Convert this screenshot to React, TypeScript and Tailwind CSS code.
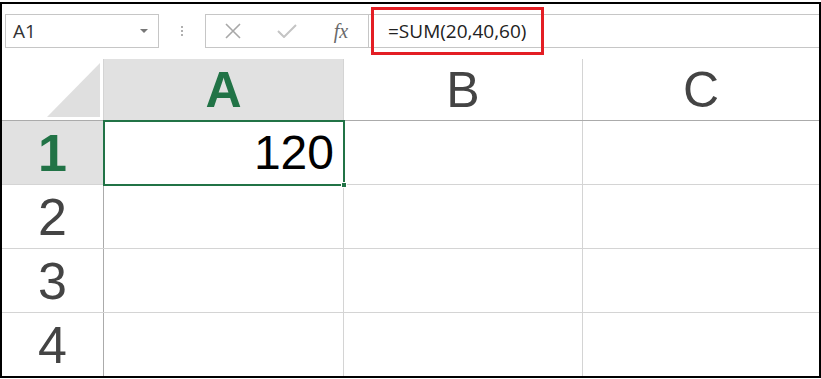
import React from "react";

const GRID_FONT = { fontFamily: '"Liberation Sans", Arial, sans-serif' };
const UI_FONT = { fontFamily: '"Open Sans", "Noto Sans", sans-serif' };

function RowHeader({ n, selected }: { n: string; selected?: boolean }) {
  return (
    <div
      className={`w-[102px] shrink-0 h-full flex items-center justify-center border-r border-[#ababab] ${
        selected ? "bg-[#e1e1e1] text-[#217346] font-bold" : "bg-white text-[#444444]"
      } text-[52px] leading-none`}
    >
      {n}
    </div>
  );
}

function EmptyRow({ n }: { n: string }) {
  return (
    <div className="h-[64px] shrink-0 flex border-b border-[#d4d4d4]">
      <RowHeader n={n} />
      <div className="w-[240px] shrink-0 border-r border-[#d4d4d4]" />
      <div className="w-[239px] shrink-0 border-r border-[#d4d4d4]" />
      <div className="flex-1" />
    </div>
  );
}

export default function App() {
  return (
    <div className="w-[821px] h-[379px] bg-white pt-[2px] overflow-hidden">
      <div className="h-[376px] border-2 border-black flex flex-col overflow-hidden">
        {/* Toolbar */}
        <div className="h-[55px] shrink-0 flex items-start pt-[10px] pl-[3px]" style={UI_FONT}>
          <div className="w-[154px] h-[34px] shrink-0 border border-[#c6c6c6] flex items-center justify-between pl-[7px] pr-[10px]">
            <span className="text-[19px] text-[#333333] leading-none">A1</span>
            <svg width="8" height="4" viewBox="0 0 8 4">
              <path d="M0 0 L8 0 L4 4 Z" fill="#777777" />
            </svg>
          </div>
          <div className="w-[46px] h-[34px] shrink-0 flex flex-col items-center justify-center gap-[2px]">
            <div className="w-[2px] h-[2px] bg-[#b0b0b0]" />
            <div className="w-[2px] h-[2px] bg-[#b0b0b0]" />
            <div className="w-[2px] h-[2px] bg-[#b0b0b0]" />
          </div>
          <div className="w-[163px] h-[34px] shrink-0 border-l border-t border-b border-[#c6c6c6] flex">
            <div className="flex-1 flex items-center justify-center">
              <svg width="18" height="16" viewBox="0 0 18 16">
                <path d="M2 1 L16 15 M16 1 L2 15" stroke="#a8a8a8" strokeWidth="1.6" fill="none" />
              </svg>
            </div>
            <div className="flex-1 flex items-center justify-center">
              <svg width="20" height="14" viewBox="0 0 20 14">
                <path d="M1 7 L7 13 L19 1" stroke="#c4c4c4" strokeWidth="2" fill="none" />
              </svg>
            </div>
            <div className="flex-1 flex items-center justify-center">
              <span
                className="italic text-[20px] text-[#6a6a6a] leading-none"
                style={{ fontFamily: '"Liberation Serif", "Times New Roman", serif' }}
              >
                fx
              </span>
            </div>
          </div>
          <div className="flex-1 h-[34px] border-l border-t border-b border-[#c6c6c6] relative flex items-center pl-[19px]">
            <span className="text-[19px] text-[#222222] leading-none">=SUM(20,40,60)</span>
            <div className="absolute left-[2px] top-[-8px] w-[173px] h-[48px] border-[3px] border-[#e31e24]" />
          </div>
        </div>

        {/* Grid */}
        <div className="flex-1 flex flex-col" style={GRID_FONT}>
          {/* Header row */}
          <div className="h-[62px] shrink-0 flex border-b border-[#ababab]">
            <div className="w-[102px] shrink-0 relative border-r border-[#d4d4d4] bg-white">
              <svg className="absolute left-0 top-0" width="102" height="62" viewBox="0 0 102 62">
                <path d="M45 58 L98 4 L98 58 Z" fill="#dfdfdf" />
              </svg>
            </div>
            <div className="w-[240px] shrink-0 bg-[#e1e1e1] border-r border-[#d4d4d4] flex items-center justify-center text-[50px] font-bold text-[#217346] leading-none">
              A
            </div>
            <div className="w-[239px] shrink-0 border-r border-[#d4d4d4] flex items-center justify-center text-[50px] text-[#444444] leading-none">
              B
            </div>
            <div className="flex-1 flex items-center justify-center text-[50px] text-[#444444] leading-none">
              C
            </div>
          </div>

          {/* Row 1 */}
          <div className="h-[64px] shrink-0 flex border-b border-[#d4d4d4]">
            <RowHeader n="1" selected />
            <div className="w-[240px] shrink-0 border-r border-[#d4d4d4] relative flex items-center justify-end pr-[9px] text-[48px] text-black leading-none">
              120
              <div className="absolute left-[-1px] top-[-1px] w-[242px] h-[66px] border-2 border-[#217346]">
                <div className="absolute right-[-4px] bottom-[-4px] w-[6px] h-[6px] bg-[#217346] border border-white" />
              </div>
            </div>
            <div className="w-[239px] shrink-0 border-r border-[#d4d4d4]" />
            <div className="flex-1" />
          </div>

          <EmptyRow n="2" />
          <EmptyRow n="3" />
          <EmptyRow n="4" />
        </div>
      </div>
    </div>
  );
}
